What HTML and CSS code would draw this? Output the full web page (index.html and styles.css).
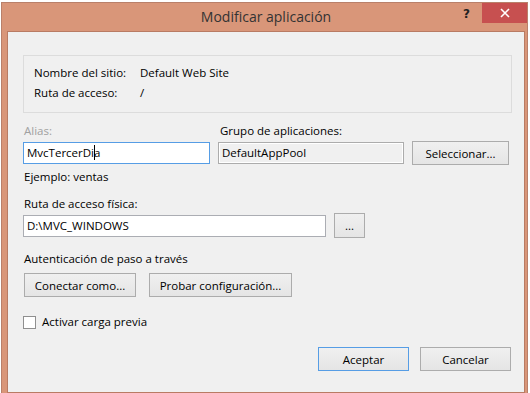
FILE: index.html
```html
<!DOCTYPE html>
<html lang="es">
<head>
    <meta charset="UTF-8">
    <title>Modificar aplicación</title>
    <link rel="stylesheet" href="styles.css">
</head>
<body>
    <div class="window">
        <div class="titlebar">
            <div></div>
            <div class="title">Modificar aplicación</div>
            <div class="controls">
                <span class="help">?</span>
                <span class="close">
                    <svg width="10" height="10" viewBox="0 0 10 10"><path d="M1 1 L9 9 M9 1 L1 9" stroke="#fff" stroke-width="1.6"/></svg>
                </span>
            </div>
        </div>
        <div class="client">
            <!-- Datos del sitio -->
            <div class="info-box">
                <div class="info-row"><span class="info-label">Nombre del sitio:</span><span>Default Web Site</span></div>
                <div class="info-row"><span class="info-label">Ruta de acceso:</span><span>/</span></div>
            </div>

            <div class="alias-grid">
                <div class="label disabled">Alias:</div>
                <div class="label span2">Grupo de aplicaciones:</div>
                <div class="textbox focused">MvcTercerDi<span class="caret"></span>a</div>
                <div class="textbox readonly">DefaultAppPool</div>
                <button class="btn">Seleccionar...</button>
            </div>
            <div class="label hint">Ejemplo: ventas</div>

            <div class="label path-label">Ruta de acceso física:</div>
            <div class="path-row">
                <div class="textbox path">D:\MVC_WINDOWS</div>
                <button class="btn dots">...</button>
            </div>

            <div class="label auth-label">Autenticación de paso a través</div>
            <div class="auth-row">
                <button class="btn connect">Conectar como...</button>
                <button class="btn test">Probar configuración...</button>
            </div>

            <label class="check-row"><span class="checkbox"></span>Activar carga previa</label>

            <div class="footer">
                <button class="btn default">Aceptar</button>
                <button class="btn">Cancelar</button>
            </div>
        </div>
    </div>
</body>
</html>
```

FILE: styles.css
```css
html, body {
    margin: 0;
    background: #ffffff;
}

body {
    font-family: 'Segoe UI', 'Open Sans', sans-serif;
    font-size: 11.5px;
    color: #000;
}

/* Marco de la ventana */
.window {
    margin: 2px 0 0 1px;
    width: 527px;
    height: 391px;
    box-sizing: border-box;
    background: #d99679;
    border: 1px solid #b9806a;
    border-bottom: none;
    display: flex;
    flex-direction: column;
}

.titlebar {
    height: 28px;
    display: grid;
    grid-template-columns: 1fr auto 1fr;
    align-items: start;
}

.title {
    font-size: 14px;
    color: #333;
    line-height: 28px;
    padding-left: 3px;
}

.controls {
    display: flex;
    justify-content: flex-end;
    align-items: flex-start;
}

.help {
    font-family: 'DejaVu Sans', sans-serif;
    font-weight: bold;
    font-size: 12px;
    color: #222;
    margin: 4px 12px 0 0;
}

.close {
    width: 45px;
    height: 20px;
    background: #c75050;
    display: flex;
    align-items: center;
    justify-content: center;
}

.client {
    margin: 0 2px 0 5px;
    height: 353px;
    background: #f0f0f0;
    border: 1px solid #b97b63;
    padding: 23px 12px 0 15px;
}

/* Caja de información */
.info-box {
    border: 1px solid #dcdcdc;
    padding: 7px 10px 9px 10px;
}

.info-row {
    height: 20px;
    line-height: 20px;
    display: flex;
}

.info-label {
    width: 106px;
}

.label {
    line-height: 16px;
}

.disabled {
    color: #a0a0a0;
    padding-left: 1px;
}

.alias-grid {
    margin-top: 10px;
    display: grid;
    grid-template-columns: 187px 186px 97px;
    column-gap: 8px;
    align-items: center;
}

.alias-grid .label {
    margin-bottom: 2px;
}

.span2 {
    grid-column: span 2;
    padding-left: 2px;
}

.textbox {
    height: 22px;
    box-sizing: border-box;
    border: 1px solid #abadb3;
    background: #fff;
    line-height: 20px;
    padding-left: 3px;
    white-space: nowrap;
}

.focused {
    border-color: #569de5;
}

.caret {
    display: inline-block;
    width: 0;
    height: 15px;
    border-left: 1px solid #000;
    vertical-align: -3px;
    margin-right: -1px;
}

.readonly {
    background: #f0f0f0;
    box-shadow: inset 0 0 0 1px #fff;
    border-color: #acacac;
}

.btn {
    font: inherit;
    color: #000;
    height: 24px;
    padding: 0;
    border: 1px solid #acacac;
    background: linear-gradient(#f0f0f0, #e5e5e5);
    border-radius: 0;
}

.hint {
    margin-top: 4px;
    padding-left: 1px;
}

.path-label {
    margin-top: 11px;
    padding-left: 1px;
}

.path-row {
    margin-top: 1px;
    display: flex;
    align-items: center;
    gap: 8px;
}

.path {
    width: 303px;
}

.dots {
    width: 31px;
    height: 25px;
}

.auth-label {
    margin-top: 13px;
    padding-left: 1px;
}

.auth-row {
    margin-top: 6px;
    display: flex;
    gap: 13px;
    padding-left: 1px;
}

.connect {
    width: 112px;
}

.test {
    width: 143px;
}

.check-row {
    margin-top: 17px;
    display: flex;
    align-items: center;
    gap: 6px;
    line-height: 16px;
}

.checkbox {
    width: 13px;
    height: 13px;
    box-sizing: border-box;
    border: 1px solid #8f8f8f;
    background: #fff;
}

.footer {
    margin-top: 17px;
    display: flex;
    justify-content: flex-end;
    gap: 11px;
    padding-right: 1px;
}

.footer .btn {
    width: 91px;
}

.btn.default {
    border-color: #569de5;
}
```
